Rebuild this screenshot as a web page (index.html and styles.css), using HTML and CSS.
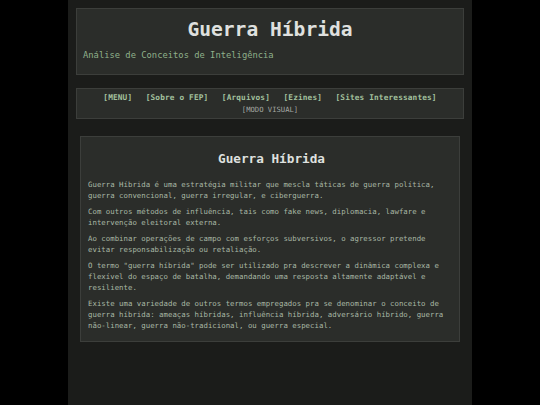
FILE: index.html
```html
<!DOCTYPE html>
<html lang="pt">
<head>
<meta charset="utf-8">
<title>Guerra Híbrida</title>
<link rel="stylesheet" href="styles.css">
</head>
<body>
<div class="page">
  <header class="header box">
    <h1 class="site-title">Guerra Híbrida</h1>
    <p class="subtitle">Análise de Conceitos de Inteligência</p>
  </header>
  <nav class="nav box">
    <div class="nav-links">
      <a href="#">[MENU]</a>
      <a href="#">[Sobre o FEP]</a>
      <a href="#">[Arquivos]</a>
      <a href="#">[Ezines]</a>
      <a href="#">[Sites Interessantes]</a>
    </div>
    <div class="mode"><a href="#">[MODO VISUAL]</a></div>
  </nav>
  <main class="content box">
    <h2 class="content-title">Guerra Híbrida</h2>
    <p>Guerra Híbrida é uma estratégia militar que mescla táticas de guerra política, guerra convencional, guerra irregular, e ciberguerra.</p>
    <p>Com outros métodos de influência, tais como fake news, diplomacia, lawfare e intervenção eleitoral externa.</p>
    <p>Ao combinar operações de campo com esforços subversivos, o agressor pretende evitar responsabilização ou retaliação.</p>
    <p>O termo "guerra híbrida" pode ser utilizado pra descrever a dinâmica complexa e flexível do espaço de batalha, demandando uma resposta altamente adaptável e resiliente.</p>
    <p>Existe uma variedade de outros termos empregados pra se denominar o conceito de guerra híbrida: ameaças híbridas, influência híbrida, adversário híbrido, guerra não-linear, guerra não-tradicional, ou guerra especial.</p>
  </main>
</div>
</body>
</html>
```

FILE: styles.css
```css
html, body {
  margin: 0;
  padding: 0;
  background: #000;
  height: 100%;
}

body {
  font-family: "DejaVu Sans Mono", "Liberation Mono", monospace;
}

.page {
  width: 388px;
  margin: 0 auto;
  padding: 8px 8px 0;
  min-height: 100%;
  box-sizing: content-box;
  background: #1b1c1a;
}

.box {
  background: #2b2d2a;
  border: 1px solid #3c3e3b;
}

.header {
  padding: 9px 6px 13px;
}

.site-title {
  margin: 0;
  text-align: center;
  font-size: 19.6px;
  line-height: 24px;
  font-weight: bold;
  color: #dfe0df;
}

.subtitle {
  margin: 8px 0 0;
  font-size: 8.8px;
  line-height: 11px;
  color: #8fb08b;
}

.nav {
  margin-top: 13px;
  padding: 4px 0 4px;
  text-align: center;
}

.nav a {
  text-decoration: none;
}

.nav-links {
  display: flex;
  justify-content: center;
  gap: 13.5px;
  font-size: 7.75px;
  line-height: 10px;
  font-weight: bold;
  letter-spacing: 0.15px;
}

.nav-links a {
  color: #a3c19e;
}

.mode {
  margin-top: 2px;
  font-size: 7.2px;
  line-height: 9px;
}

.mode a {
  color: #a4a8a3;
}

.content {
  margin: 17px 4px 0;
  padding: 14px 4px 10px 7px;
}

.content-title {
  margin: 0 0 11.5px;
  text-align: center;
  font-size: 12.7px;
  line-height: 16px;
  font-weight: bold;
  color: #dfe0df;
}

.content p {
  margin: 0 0 5px;
  font-size: 7.35px;
  line-height: 11px;
  letter-spacing: 0.02px;
  color: #a9b8a5;
}

.content p:last-child {
  margin-bottom: 0;
}
```
